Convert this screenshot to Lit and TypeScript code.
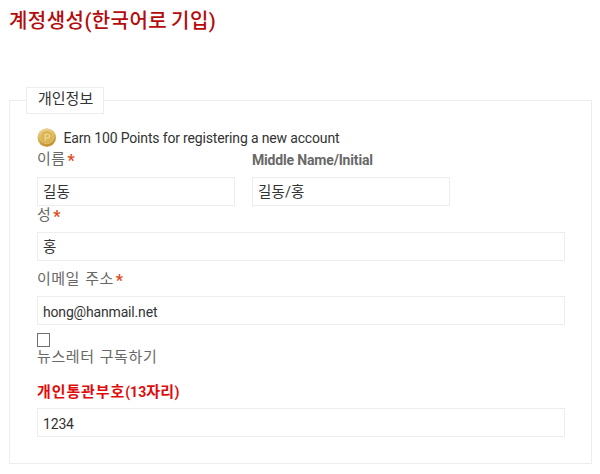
import { LitElement, html, css, svg } from "lit";
import { customElement, property } from "lit/decorators.js";

@customElement("form-field")
class FormField extends LitElement {
  @property() label = "";
  @property() value = "";
  @property({ type: Boolean }) required = false;
  @property({ type: Boolean }) korean = false;

  static styles = css`
    :host { display: flex; flex-direction: column; }
    .label {
      height: 26px;
      line-height: 18px;
      color: #686868;
      font-weight: 700;
      white-space: nowrap;
      letter-spacing: -0.17px;
      display: flex;
    }
    .ko { font-size: 15px; font-weight: 400; letter-spacing: 0.4px; line-height: var(--label-line, 18px); word-spacing: 1.5px; }
    .star { color: #df4a1c; font-size: 16px; margin-left: 2px; line-height: var(--star-line, 22px); font-weight: 700; }
    .box {
      box-sizing: border-box;
      width: 100%;
      height: 29px;
      border: 1px solid #ededed;
      border-radius: 0;
      padding: 3px 5px 0;
      margin: 0;
      background: #fff;
      color: #333;
      font: 14px Roboto, "Noto Sans CJK KR", sans-serif;
      letter-spacing: -0.17px;
      outline: none;
    }
    .box.hangul { font-size: 14.5px; letter-spacing: 0.1px; padding: 0 5px 3px; }
  `;

  render() {
    return html`
      ${this.label
        ? html`<div class="label">
            <span class=${/[가-힣]/.test(this.label) ? "ko" : ""}>${this.label}</span>
            ${this.required ? html`<span class="star">*</span>` : ""}
          </div>`
        : ""}
      <input class="box ${this.korean ? "hangul" : ""}" .value=${this.value} />
    `;
  }
}

@customElement("app-root")
class AppRoot extends LitElement {
  static styles = css`
    :host {
      display: block;
      box-sizing: border-box;
      width: 600px;
      height: 474px;
      padding: 8px 8px 0 9px;
      background: #fff;
      color: #333;
      font: 14px Roboto, "Noto Sans CJK KR", sans-serif;
      overflow: hidden;
    }
    .title {
      margin: 0;
      height: 92px;
      line-height: 27px;
      font-size: 20px;
      font-weight: 500;
      color: #b50b0b;
      white-space: nowrap;
      letter-spacing: 0.45px;
    }
    .title .gap { word-spacing: -1.5px; }
    .panel {
      box-sizing: border-box;
      width: 583px;
      height: 364px;
      border: 1px solid #ededed;
      padding: 0 26px 0 27px;
      display: flex;
      flex-direction: column;
    }
    .legend {
      box-sizing: border-box;
      width: 78px;
      height: 27px;
      margin: -14px 0 0 -11px;
      border: 1px solid #ededed;
      background: #fff;
      padding-left: 11px;
      line-height: 22px;
      font-size: 15px;
      white-space: nowrap;
    }
    .points {
      display: flex;
      height: 20px;
      margin-top: 14px;
      line-height: 20px;
      letter-spacing: -0.16px;
    }
    .coin { width: 20px; height: 20px; margin-right: 6.5px; }
    .names { display: flex; gap: 17px; margin-top: 3px; --label-line: 16px; --star-line: 20px; }
    .names form-field { width: 198px; }
    .email { margin-top: 9px; }
    .check {
      box-sizing: border-box;
      width: 13px;
      height: 14px;
      border: 1px solid #707070;
      margin-top: 8px;
    }
    .news {
      height: 37px;
      line-height: 20px;
      font-size: 15px;
      letter-spacing: 0.6px;
      word-spacing: 0.8px;
      color: #686868;
    }
    .customs {
      height: 24px;
      line-height: 16px;
      color: #df0c0c;
      font-weight: 700;
      white-space: nowrap;
    }
    .customs .ko { font-size: 15px; letter-spacing: 0.9px; }
    .customs .end { font-size: 15px; letter-spacing: 0.3px; }
  `;

  private coin() {
    return svg`
      <svg class="coin" viewBox="0 0 20 20">
        <defs>
          <linearGradient id="gold" x1="0" y1="0" x2="0.25" y2="1">
            <stop offset="0" stop-color="#f3dc9c" />
            <stop offset="0.5" stop-color="#e0bb60" />
            <stop offset="1" stop-color="#c4932b" />
          </linearGradient>
        </defs>
        <ellipse cx="9.8" cy="9.8" rx="9.2" ry="9.2" fill="#cba654" />
        <ellipse cx="9.8" cy="9.2" rx="9" ry="8.8" fill="url(#gold)" />
        <circle cx="9.8" cy="9.2" r="6.6" fill="#dab456" stroke="#e8ca7c" stroke-width=".7" />
        <path d="M8.2 13V6.2h2.1c3 0 3 3.9 0 3.9H8.2" fill="none" stroke="#f3dc94" stroke-width="1.1" />
      </svg>`;
  }

  render() {
    return html`
      <h1 class="title">계정생성(한국어로<span class="gap"> </span>기입)</h1>
      <section class="panel">
        <div class="legend">개인정보</div>
        <div class="points">${this.coin()}<span>Earn 100 Points for registering a new account</span></div>
        <div class="names">
          <form-field label="이름" value="길동" required korean></form-field>
          <form-field label="Middle Name/Initial" value="길동/홍" korean></form-field>
        </div>
        <form-field label="성" value="홍" required korean></form-field>
        <form-field class="email" label="이메일 주소" value="hong@hanmail.net" required></form-field>
        <div class="check" role="checkbox" aria-checked="false" aria-label="뉴스레터 구독하기"></div>
        <div class="news">뉴스레터 구독하기</div>
        <div class="customs"><span class="ko">개인통관부호</span>(13<span class="end">자리</span>)</div>
        <form-field value="1234"></form-field>
      </section>
    `;
  }
}
